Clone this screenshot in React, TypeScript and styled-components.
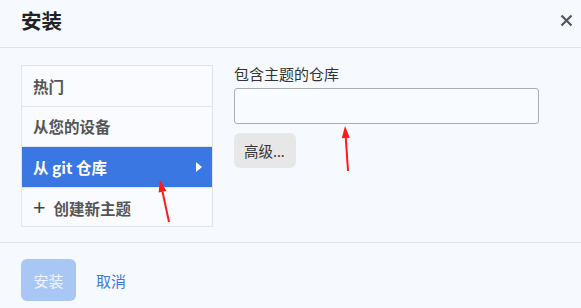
import styled, { createGlobalStyle } from 'styled-components';

const GlobalStyle = createGlobalStyle`
	html, body {
		margin: 0;
		padding: 0;
		background: #f6faff;
	}
	body {
		font-family: "Noto Sans", "Noto Sans CJK SC", sans-serif;
	}
`;

const Dialog = styled.div`
	position: relative;
	width: 581px;
	height: 308px;
	background: #f6faff;
	display: flex;
	flex-direction: column;
	overflow: hidden;
`;

const Header = styled.header`
	display: flex;
	align-items: center;
	justify-content: space-between;
	height: 48px;
	padding: 0 7px 0 21px;
	border-bottom: 1px solid #e1e5ea;
	box-sizing: border-box;
`;

const Title = styled.h1`
	margin: 0 0 8px;
	font-size: 20.5px;
	font-weight: 700;
	color: #222;
	font-family: "Noto Sans CJK SC", sans-serif;
`;

const CloseButton = styled.button`
	border: 0;
	background: none;
	padding: 0;
	width: 16px;
	height: 16px;
	display: flex;
	align-items: center;
	justify-content: center;
	margin-bottom: 6px;
	cursor: pointer;
`;

const Body = styled.div`
	display: flex;
	gap: 21px;
	padding: 17px 21px 0;
	height: 195px;
	box-sizing: border-box;
	border-bottom: 1px solid #e1e5ea;
`;

const Menu = styled.ul`
	list-style: none;
	margin: 0;
	padding: 0;
	width: 192px;
	height: 162px;
	border: 1px solid #e1e5ea;
	box-sizing: border-box;
	background: #f9fbff;
`;

const MenuItem = styled.li<{ $active?: boolean }>`
	display: flex;
	align-items: center;
	justify-content: space-between;
	height: 39.5px;
	box-sizing: border-box;
	padding: 0 10px 0 11px;
	font-family: "Noto Sans CJK SC", sans-serif;
	font-size: 15.5px;
	font-weight: 700;
	color: ${(p) => (p.$active ? '#fff' : '#555')};
	background: ${(p) => (p.$active ? '#3a77e3' : 'transparent')};
	& + & {
		border-top: 1px solid #e1e5ea;
		height: 40.5px;
	}
`;

const Plus = styled.span`
	font-family: "Noto Sans", sans-serif;
	font-weight: 400;
	font-size: 22px;
	margin-right: 8px;
	line-height: 1;
	color: #444;
`;

const Triangle = styled.span`
	width: 0;
	height: 0;
	border-top: 5px solid transparent;
	border-bottom: 5px solid transparent;
	border-left: 6px solid #fff;
`;

const Content = styled.div`
	display: flex;
	flex-direction: column;
	align-items: flex-start;
`;

const Label = styled.label`
	font-family: "Noto Sans CJK SC", sans-serif;
	font-size: 15px;
	color: #333;
	line-height: 18px;
	margin-bottom: 5px;
`;

const Input = styled.input`
	width: 305px;
	height: 36px;
	box-sizing: border-box;
	border: 1px solid #aeaeae;
	border-radius: 3px;
	background: #f8fbff;
	margin-bottom: 9px;
`;

const GhostButton = styled.button`
	height: 35px;
	padding: 0 11px 0 10px;
	border: 0;
	border-radius: 6px;
	background: #e7e7e7;
	font-family: "Noto Sans", "Noto Sans CJK SC", sans-serif;
	font-size: 14.5px;
	color: #333;
`;

const Footer = styled.footer`
	display: flex;
	align-items: center;
	gap: 20px;
	padding: 16px 21px 0;
`;

const PrimaryButton = styled.button<{ $disabled?: boolean }>`
	width: 55px;
	height: 42px;
	border: 0;
	border-radius: 6px;
	background: ${(p) => (p.$disabled ? '#a9c7f5' : '#3a77e3')};
	color: ${(p) => (p.$disabled ? '#eef4fe' : '#fff')};
	font-family: "Noto Sans CJK SC", sans-serif;
	font-size: 15px;
`;

const LinkButton = styled.button`
	border: 0;
	background: none;
	padding: 0;
	color: #3a77e3;
	font-family: "Noto Sans CJK SC", sans-serif;
	font-size: 15px;
`;

const Annotation = styled.svg`
	position: absolute;
	left: 0;
	top: 0;
	pointer-events: none;
`;

const MENU = ['热门', '从您的设备', '从 git 仓库', '创建新主题'];

const Arrow = ({ x1, y1, x2, y2 }: { x1: number; y1: number; x2: number; y2: number }) => {
	const a = Math.atan2(y2 - y1, x2 - x1);
	const l = 12;
	const w = 4;
	const bx = x2 - l * Math.cos(a);
	const by = y2 - l * Math.sin(a);
	const px = -Math.sin(a) * w;
	const py = Math.cos(a) * w;
	return (
		<g>
			<line x1={x1} y1={y1} x2={bx} y2={by} stroke="#ff1a1a" strokeWidth={2} />
			<polygon points={`${x2},${y2} ${bx + px},${by + py} ${bx - px},${by - py}`} fill="#ff1a1a" />
		</g>
	);
};

const App = () => {
	return (
		<Dialog>
			<GlobalStyle />
			<Header>
				<Title>安装</Title>
				<CloseButton aria-label="close">
					<svg width="13" height="13" viewBox="0 0 13 13">
						<path d="M1.5 1.5 L11.5 11.5 M11.5 1.5 L1.5 11.5" stroke="#555" strokeWidth="2.2" />
					</svg>
				</CloseButton>
			</Header>
			<Body>
				<Menu>
					{MENU.map((item, i) => (
						<MenuItem key={item} $active={i === 2}>
							<span>
								{i === 3 && <Plus>+</Plus>}
								{item}
							</span>
							{i === 2 && <Triangle />}
						</MenuItem>
					))}
				</Menu>
				<Content>
					<Label>包含主题的仓库</Label>
					<Input />
					<GhostButton>高级...</GhostButton>
				</Content>
			</Body>
			<Footer>
				<PrimaryButton $disabled>安装</PrimaryButton>
				<LinkButton>取消</LinkButton>
			</Footer>
			<Annotation width="581" height="308">
				<Arrow x1={169} y1={222} x2={160} y2={180} />
				<Arrow x1={348} y1={171} x2={345} y2={126} />
			</Annotation>
		</Dialog>
	);
};

export default App;
